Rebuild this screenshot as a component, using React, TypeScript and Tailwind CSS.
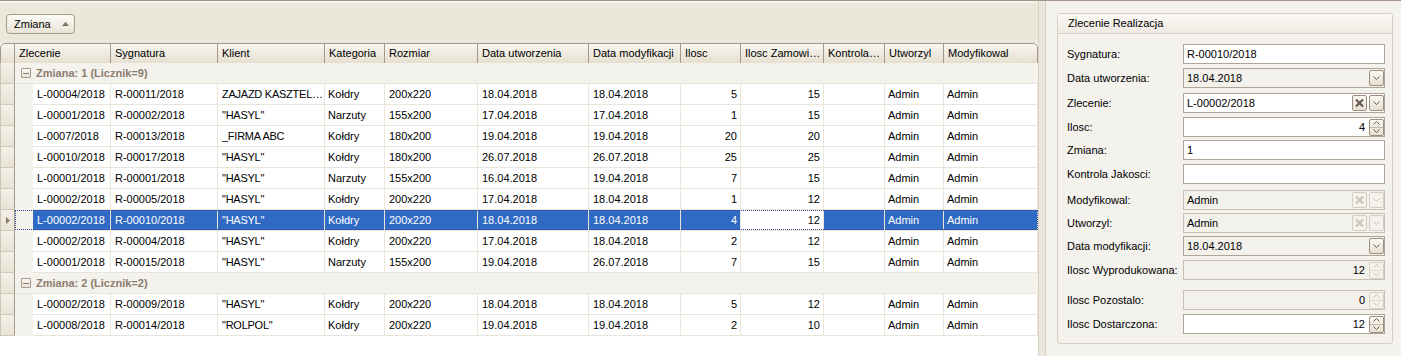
import React from "react";

type Row = {
  zl: string;
  syg: string;
  kl: string;
  kat: string;
  roz: string;
  du: string;
  dm: string;
  il: string;
  zam: string;
  ut: string;
  mod: string;
};

const r = (
  zl: string,
  syg: string,
  kl: string,
  kat: string,
  roz: string,
  du: string,
  dm: string,
  il: string,
  zam: string,
): Row => ({ zl, syg, kl, kat, roz, du, dm, il, zam, ut: "Admin", mod: "Admin" });

const GROUP_1: Row[] = [
  r("L-00004/2018", "R-00011/2018", "ZAJAZD KASZTEL…", "Kołdry", "200x220", "18.04.2018", "18.04.2018", "5", "15"),
  r("L-00001/2018", "R-00002/2018", '"HASYL"', "Narzuty", "155x200", "17.04.2018", "17.04.2018", "1", "15"),
  r("L-0007/2018", "R-00013/2018", "_FIRMA ABC", "Kołdry", "180x200", "19.04.2018", "19.04.2018", "20", "20"),
  r("L-00010/2018", "R-00017/2018", '"HASYL"', "Kołdry", "180x200", "26.07.2018", "26.07.2018", "25", "25"),
  r("L-00001/2018", "R-00001/2018", '"HASYL"', "Narzuty", "155x200", "16.04.2018", "19.04.2018", "7", "15"),
  r("L-00002/2018", "R-00005/2018", '"HASYL"', "Kołdry", "200x220", "17.04.2018", "18.04.2018", "1", "12"),
  r("L-00002/2018", "R-00010/2018", '"HASYL"', "Kołdry", "200x220", "18.04.2018", "18.04.2018", "4", "12"),
  r("L-00002/2018", "R-00004/2018", '"HASYL"', "Kołdry", "200x220", "17.04.2018", "18.04.2018", "2", "12"),
  r("L-00001/2018", "R-00015/2018", '"HASYL"', "Narzuty", "155x200", "19.04.2018", "26.07.2018", "7", "15"),
];

const GROUP_2: Row[] = [
  r("L-00002/2018", "R-00009/2018", '"HASYL"', "Kołdry", "200x220", "18.04.2018", "18.04.2018", "5", "12"),
  r("L-00008/2018", "R-00014/2018", '"ROLPOL"', "Kołdry", "200x220", "19.04.2018", "19.04.2018", "2", "10"),
];

const SELECTED = 6;

function ChevronDown({ color }: { color: string }) {
  return (
    <svg width="7" height="4" viewBox="0 0 7 4">
      <polyline points="0.5,0.5 3.5,3.5 6.5,0.5" fill="none" stroke={color} strokeWidth="1" />
    </svg>
  );
}

function ChevronUp({ color }: { color: string }) {
  return (
    <svg width="7" height="4" viewBox="0 0 7 4">
      <polyline points="0.5,3.5 3.5,0.5 6.5,3.5" fill="none" stroke={color} strokeWidth="1" />
    </svg>
  );
}

function Cross({ color }: { color: string }) {
  return (
    <svg width="9" height="8" viewBox="0 0 9 8">
      <path d="M1 0.5 L8 7.5 M8 0.5 L1 7.5" stroke={color} strokeWidth="2.2" />
    </svg>
  );
}

function Indicator({ arrow }: { arrow?: boolean }) {
  return (
    <div className="flex h-[21px] w-[15px] shrink-0 items-center justify-center border-b border-l border-r border-b-[#d2c8b7] border-l-[#cfc5b5] border-r-[#a8978a] bg-linear-to-b from-[#f3f0e8] to-[#e8e3d6]">
      {arrow && (
        <svg width="4" height="7" viewBox="0 0 4 7">
          <polygon points="0,0 4,3.5 0,7" fill="#8a7868" />
        </svg>
      )}
    </div>
  );
}

function GroupRow({ text }: { text: string }) {
  return (
    <div className="flex h-[21px]">
      <Indicator />
      <div className="flex flex-1 items-center border-b border-[#e9e5d8] bg-[#f4f2ec] pl-[6px]">
        <div className="flex h-[10px] w-[10px] items-center justify-center rounded-[1px] border border-[#a8998b] bg-linear-to-b from-[#faf8f4] to-[#e9e4d8]">
          <div className="h-px w-[6px] bg-[#8a7a6a]" />
        </div>
        <span className="ml-[5px] font-bold text-[#8c7c6e]">{text}</span>
      </div>
    </div>
  );
}

function DataRow({ row, selected }: { row: Row; selected?: boolean }) {
  const cell = "flex h-[21px] shrink-0 items-center overflow-hidden whitespace-nowrap border-b border-r border-[#e9e5d8]";
  const tone = selected ? "bg-[#316ac5] text-white" : "bg-white";
  return (
    <div className="flex h-[21px]">
      <Indicator arrow={selected} />
      <div className="relative flex flex-1">
        <div className="w-[18px] shrink-0 bg-[#f4f2ec]" />
        <div className={`${cell} ${tone} w-[78px] pl-[4px]`}>{row.zl}</div>
        <div className={`${cell} ${tone} w-[107px] pl-[4px]`}>{row.syg}</div>
        <div className={`${cell} ${tone} w-[107px] pl-[4px] tracking-[-0.25px]`}>{row.kl}</div>
        <div className={`${cell} ${tone} w-[60px] pl-[3px]`}>{row.kat}</div>
        <div className={`${cell} ${tone} w-[93px] pl-[4px]`}>{row.roz}</div>
        <div className={`${cell} ${tone} w-[111px] pl-[4px]`}>{row.du}</div>
        <div className={`${cell} ${tone} w-[92px] pl-[4px]`}>{row.dm}</div>
        <div className={`${cell} ${tone} w-[60px] justify-end pr-[3px]`}>{row.il}</div>
        <div className={`${cell} w-[83px] justify-end bg-white pr-[3px]`}>{row.zam}</div>
        <div className={`${cell} ${tone} w-[61px]`} />
        <div className={`${cell} ${tone} w-[59px] pl-[3px]`}>{row.ut}</div>
        <div className={`${cell} ${tone} w-[94px] pl-[3px]`}>{row.mod}</div>
        {selected && (
          <div className="pointer-events-none absolute inset-x-0 top-0 h-[20px] border border-dotted border-[#2d4f96]" />
        )}
      </div>
    </div>
  );
}

const HEADERS: { label: string; w: string }[] = [
  { label: "Zlecenie", w: "w-[96px]" },
  { label: "Sygnatura", w: "w-[107px]" },
  { label: "Klient", w: "w-[107px]" },
  { label: "Kategoria", w: "w-[60px]" },
  { label: "Rozmiar", w: "w-[93px]" },
  { label: "Data utworzenia", w: "w-[111px]" },
  { label: "Data modyfikacji", w: "w-[92px]" },
  { label: "Ilosc", w: "w-[60px]" },
  { label: "Ilosc Zamowi…", w: "w-[83px]" },
  { label: "Kontrola…", w: "w-[61px]" },
  { label: "Utworzyl", w: "w-[59px]" },
  { label: "Modyfikowal", w: "w-[94px]" },
];

function Header() {
  return (
    <div className="flex h-[20px]">
      <div className="w-[15px] shrink-0 rounded-tl-[5px] border-l border-r border-t border-[#a8978a] bg-linear-to-b from-[#f8f6f0] to-[#e6dfd0]" />
      {HEADERS.map((h, i) => (
        <div
          key={h.label}
          className={`${h.w} flex shrink-0 items-center overflow-hidden whitespace-nowrap border-r border-t border-[#a8978a] bg-linear-to-b from-[#f8f6f0] to-[#e6dfd0] pl-[4px] ${
            i === HEADERS.length - 1 ? "rounded-tr-[5px]" : ""
          }`}
        >
          {h.label}
        </div>
      ))}
    </div>
  );
}

function Btn({ disabled, children }: { disabled?: boolean; children: React.ReactNode }) {
  return (
    <div
      className={`flex h-[16px] w-[15px] items-center justify-center rounded-[2px] border ${
        disabled ? "border-[#d6cec3] bg-[#f4f2ec]" : "border-[#9e8e7e] bg-linear-to-b from-[#faf8f3] to-[#e6dfd2]"
      }`}
    >
      {children}
    </div>
  );
}

function Spin({ disabled }: { disabled?: boolean }) {
  const c = disabled ? "#cdc5ba" : "#6b5b4c";
  return (
    <div
      className={`flex h-[17px] w-[15px] flex-col rounded-[2px] border ${
        disabled ? "border-[#d6cec3] bg-[#f4f2ec]" : "border-[#9e8e7e] bg-linear-to-b from-[#faf8f3] to-[#e6dfd2]"
      }`}
    >
      <div className={`flex flex-1 items-center justify-center border-b ${disabled ? "border-[#e0d9cf]" : "border-[#c4b8a9]"}`}>
        <ChevronUp color={c} />
      </div>
      <div className="flex flex-1 items-center justify-center">
        <ChevronDown color={c} />
      </div>
    </div>
  );
}

type Field = {
  label: string;
  value: string;
  mt: string;
  kind: "text" | "date" | "lookup" | "spin";
  grey?: boolean;
  disabled?: boolean;
};

const FIELDS: Field[] = [
  { label: "Sygnatura:", value: "R-00010/2018", mt: "mt-[10px]", kind: "text" },
  { label: "Data utworzenia:", value: "18.04.2018", mt: "mt-[4px]", kind: "date", grey: true },
  { label: "Zlecenie:", value: "L-00002/2018", mt: "mt-[5px]", kind: "lookup" },
  { label: "Ilosc:", value: "4", mt: "mt-[4px]", kind: "spin" },
  { label: "Zmiana:", value: "1", mt: "mt-[3px]", kind: "text" },
  { label: "Kontrola Jakosci:", value: "", mt: "mt-[4px]", kind: "text" },
  { label: "Modyfikowal:", value: "Admin", mt: "mt-[6px]", kind: "lookup", grey: true, disabled: true },
  { label: "Utworzyl:", value: "Admin", mt: "mt-[3px]", kind: "lookup", grey: true, disabled: true },
  { label: "Data modyfikacji:", value: "18.04.2018", mt: "mt-[3px]", kind: "date", grey: true },
  { label: "Ilosc Wyprodukowana:", value: "12", mt: "mt-[4px]", kind: "spin", grey: true, disabled: true },
  { label: "Ilosc Pozostalo:", value: "0", mt: "mt-[10px]", kind: "spin", grey: true, disabled: true },
  { label: "Ilosc Dostarczona:", value: "12", mt: "mt-[4px]", kind: "spin" },
];

function FieldRow({ f }: { f: Field }) {
  const glyph = f.disabled ? "#cdc5ba" : "#6b5b4c";
  return (
    <div className={`${f.mt} flex h-[20px] items-center pl-[9px]`}>
      <div className="w-[116px] whitespace-nowrap">{f.label}</div>
      <div
        className={`flex h-[20px] w-[202px] items-center border ${
          f.disabled ? "border-[#c9beb2]" : "border-[#b0a498]"
        } ${f.grey ? "bg-[#f3f1ec]" : "bg-white"}`}
      >
        {f.kind === "spin" ? (
          <>
            <div className="flex-1 pr-[4px] text-right">{f.value}</div>
            <Spin disabled={f.disabled} />
          </>
        ) : (
          <>
            <div className="flex-1 pl-[3px]">{f.value}</div>
            {f.kind === "lookup" && (
              <div className="mr-[2px]">
                <Btn disabled={f.disabled}>
                  <Cross color={glyph} />
                </Btn>
              </div>
            )}
            {(f.kind === "lookup" || f.kind === "date") && (
              <Btn disabled={f.disabled}>
                <ChevronDown color={glyph} />
              </Btn>
            )}
          </>
        )}
      </div>
    </div>
  );
}

export default function App() {
  return (
    <div className="flex h-[356px] w-[1401px] overflow-hidden border-t border-[#a39485] bg-white font-['Liberation_Sans',Arial,sans-serif] text-[11px] leading-none text-black">
      <div className="flex w-[1038px] shrink-0 flex-col">
        <div className="h-[42px] border-t-2 border-[#f6f4ee] bg-[#ebe7da] pl-[6px] pt-[11px]">
          <div className="flex h-[20px] w-[69px] items-center justify-between rounded-[4px] border border-[#a99a8b] bg-linear-to-b from-[#fbfaf6] to-[#e9e3d6] pl-[7px] pr-[5px]">
            <span>Zmiana</span>
            <svg width="7" height="4" viewBox="0 0 7 4">
              <polygon points="0,4 3.5,0 7,4" fill="#7d6d5e" />
            </svg>
          </div>
        </div>
        <Header />
        <GroupRow text="Zmiana: 1 (Licznik=9)" />
        {GROUP_1.map((row, i) => (
          <DataRow key={`a${i}`} row={row} selected={i === SELECTED} />
        ))}
        <GroupRow text="Zmiana: 2 (Licznik=2)" />
        {GROUP_2.map((row, i) => (
          <DataRow key={`b${i}`} row={row} />
        ))}
      </div>

      <div className="w-[8px] shrink-0 border-l border-r border-[#d8d0c3] bg-[#ebe7dc]" />

      <div className="flex-1 bg-[#f4f2ed] pl-[11px] pt-[12px]">
        <div className="h-[331px] w-[336px] rounded-[3px] border border-[#d8cfc3]">
          <div className="flex h-[20px] items-center border-b border-[#d8cfc3] bg-linear-to-b from-[#faf8f4] to-[#efebe3] pl-[10px]">
            Zlecenie Realizacja
          </div>
          {FIELDS.map((f) => (
            <FieldRow key={f.label} f={f} />
          ))}
        </div>
      </div>
    </div>
  );
}
